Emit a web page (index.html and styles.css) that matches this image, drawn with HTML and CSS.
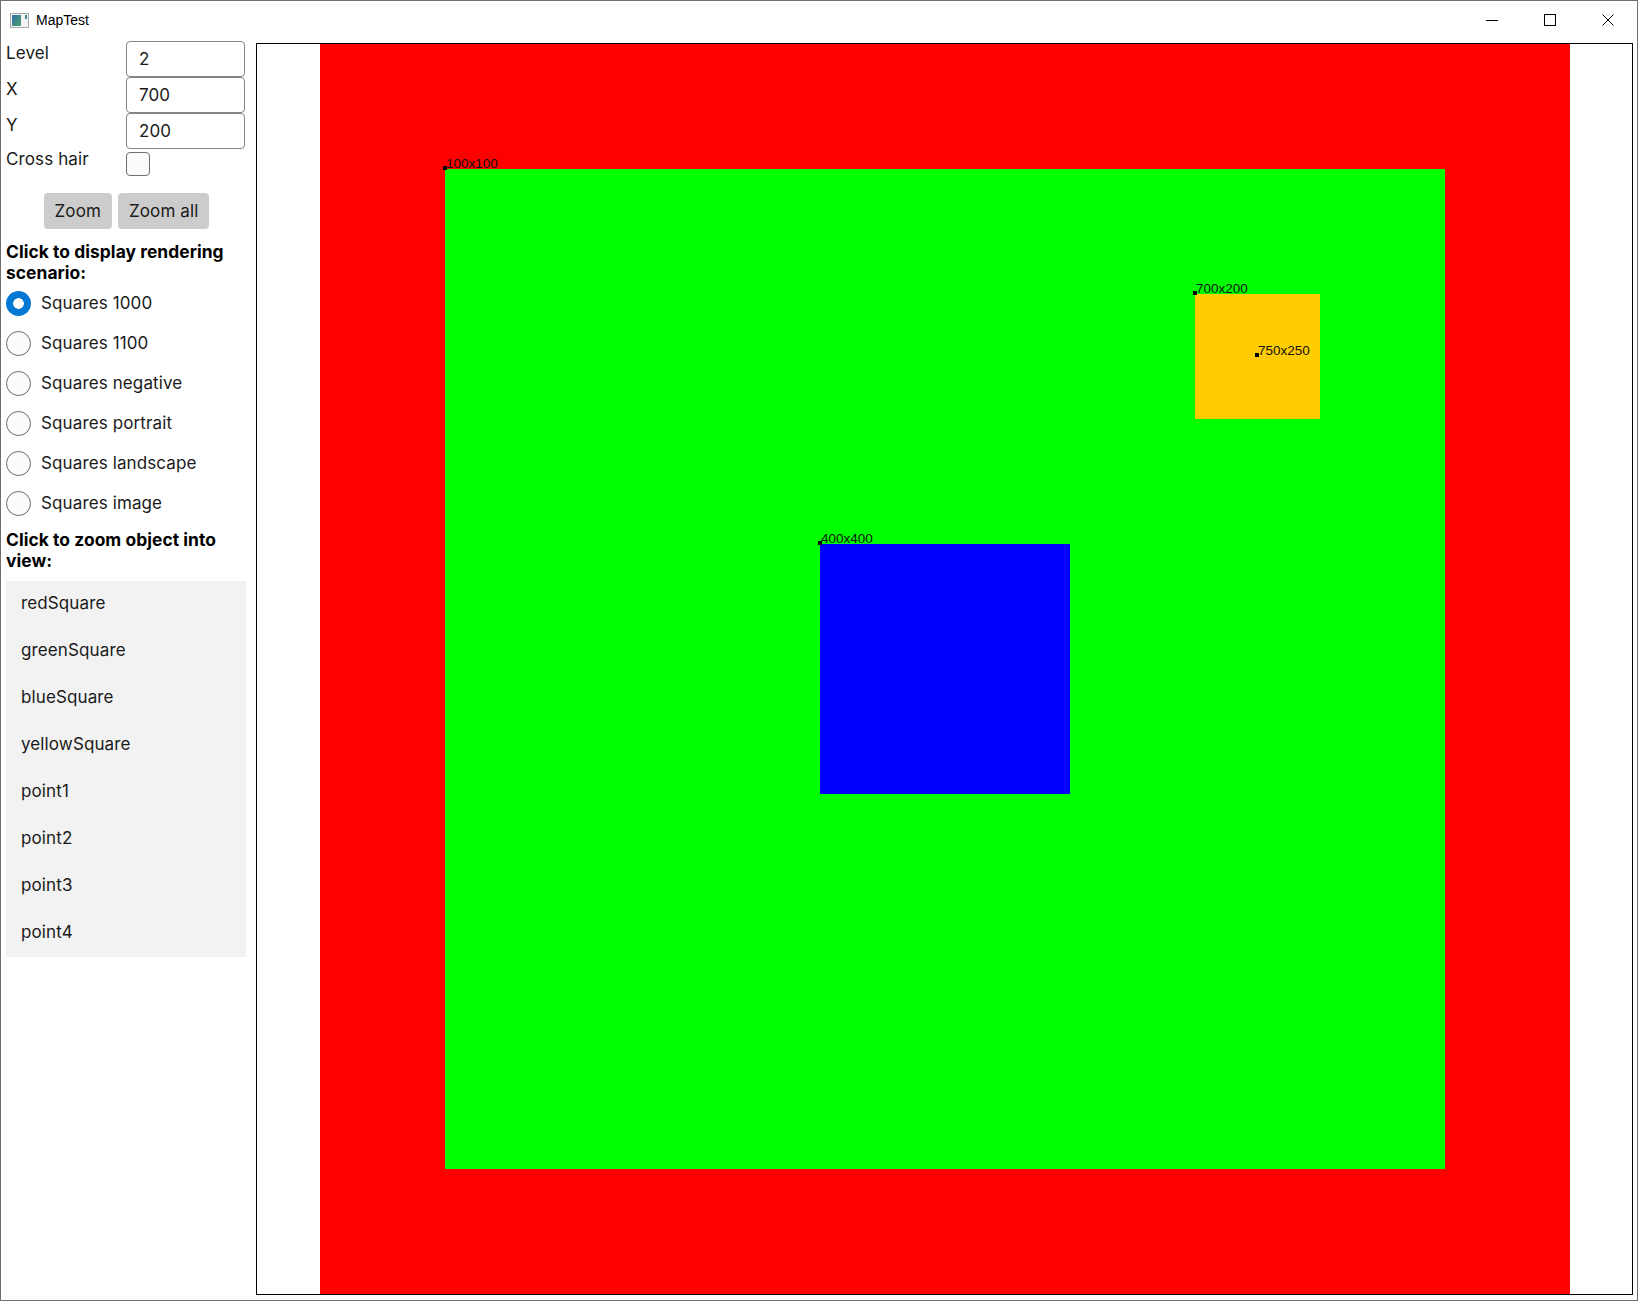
FILE: index.html
```html
<!DOCTYPE html>
<html lang="en">
<head>
<meta charset="utf-8">
<title>MapTest</title>
<link rel="stylesheet" href="styles.css">
</head>
<body>
<div class="window">
  <header class="titlebar">
    <div class="app-title">
      <svg class="app-icon" width="19" height="15" viewBox="0 0 19 15">
        <defs>
          <linearGradient id="ig" x1="0" y1="0" x2="1" y2="1">
            <stop offset="0" stop-color="#2f6fa8"/>
            <stop offset="1" stop-color="#4fa36a"/>
          </linearGradient>
        </defs>
        <rect x="0.5" y="0.5" width="18" height="14" fill="#f4f4f4" stroke="#a8a8a8"/>
        <rect x="2" y="2" width="9" height="11" fill="url(#ig)"/>
        <rect x="15" y="2" width="2" height="4" fill="#3d8b8b"/>
      </svg>
      <span class="title-text">MapTest</span>
    </div>
    <div class="caption-buttons">
      <div class="cap-btn">
        <svg width="12" height="12" viewBox="0 0 12 12"><path d="M0 6.5H12" stroke="#000" stroke-width="1"/></svg>
      </div>
      <div class="cap-btn">
        <svg width="12" height="12" viewBox="0 0 12 12"><rect x="0.5" y="0.5" width="11" height="11" fill="none" stroke="#000" stroke-width="1"/></svg>
      </div>
      <div class="cap-btn">
        <svg width="12" height="12" viewBox="0 0 12 12"><path d="M0.5 0.5L11.5 11.5M11.5 0.5L0.5 11.5" stroke="#000" stroke-width="1"/></svg>
      </div>
    </div>
  </header>

  <main class="content">
    <aside class="sidebar">
      <div class="form">
        <div class="form-label">Level</div>
        <div class="textbox">2</div>
        <div class="form-label">X</div>
        <div class="textbox">700</div>
        <div class="form-label">Y</div>
        <div class="textbox">200</div>
        <div class="form-label form-label-check">Cross hair</div>
        <div class="check-cell"><span class="checkbox"></span></div>
      </div>

      <div class="buttons">
        <button class="btn">Zoom</button>
        <button class="btn">Zoom all</button>
      </div>

      <div class="heading">Click to display rendering scenario:</div>
      <div class="radios">
        <div class="radio-row"><span class="radio checked"></span><span>Squares 1000</span></div>
        <div class="radio-row"><span class="radio"></span><span>Squares 1100</span></div>
        <div class="radio-row"><span class="radio"></span><span>Squares negative</span></div>
        <div class="radio-row"><span class="radio"></span><span>Squares portrait</span></div>
        <div class="radio-row"><span class="radio"></span><span>Squares landscape</span></div>
        <div class="radio-row"><span class="radio"></span><span>Squares image</span></div>
      </div>

      <div class="heading heading-2">Click to zoom object into view:</div>
      <ul class="object-list">
        <li>redSquare</li>
        <li>greenSquare</li>
        <li>blueSquare</li>
        <li>yellowSquare</li>
        <li>point1</li>
        <li>point2</li>
        <li>point3</li>
        <li>point4</li>
      </ul>
    </aside>

    <section class="map">
      <div class="canvas">
        <div class="shape green-square"></div>
        <div class="shape yellow-square"></div>
        <div class="shape blue-square"></div>

        <div class="point p1"><span class="dot"></span><span class="plabel">100x100</span></div>
        <div class="point p2"><span class="dot"></span><span class="plabel">700x200</span></div>
        <div class="point p3"><span class="dot"></span><span class="plabel">750x250</span></div>
        <div class="point p4"><span class="dot"></span><span class="plabel">400x400</span></div>
      </div>
    </section>
  </main>
</div>
</body>
</html>
```

FILE: styles.css
```css
* {
  box-sizing: border-box;
}

html, body {
  margin: 0;
  padding: 0;
  background: #ffffff;
}

.window {
  width: 1638px;
  height: 1301px;
  border: 1px solid #707070;
  display: flex;
  flex-direction: column;
  background: #ffffff;
  font-family: Inter, "Noto Sans", sans-serif;
  color: #1a1a1a;
  overflow: hidden;
}

/* ---------- title bar ---------- */
.titlebar {
  height: 40px;
  flex: 0 0 40px;
  display: flex;
  align-items: stretch;
  justify-content: space-between;
  padding-bottom: 3px;
}

.app-title {
  display: flex;
  align-items: center;
  padding-left: 9px;
  gap: 7px;
}

.app-icon {
  display: block;
  margin-top: 1px;
}

.title-text {
  font-family: "Liberation Sans", Arial, sans-serif;
  font-size: 14px;
  color: #000;
}

.caption-buttons {
  display: flex;
}

.cap-btn {
  width: 58px;
  display: flex;
  align-items: center;
  justify-content: center;
}

.cap-btn svg {
  display: block;
}

/* ---------- content ---------- */
.content {
  flex: 1;
  display: flex;
  min-height: 0;
}

.sidebar {
  width: 255px;
  flex: 0 0 255px;
  padding-left: 5px;
  padding-right: 9px;
  font-size: 17px;
  letter-spacing: 0.12px;
}

.form {
  display: grid;
  grid-template-columns: 120px 119px;
  grid-template-rows: 36px 36px 36px 28px;
}

.form-label {
  line-height: 24px;
  color: #1a1a1a;
}

.form-label-check {
  margin-top: -2px;
}

.textbox {
  height: 36px;
  border: 1px solid #858585;
  border-radius: 4px;
  padding-left: 12px;
  line-height: 34px;
  color: #1a1a1a;
}

.check-cell {
  padding-top: 3px;
}

.checkbox {
  display: block;
  width: 24px;
  height: 24px;
  border: 1px solid #6e6e6e;
  border-radius: 4px;
  background: #fbfbfb;
}

.buttons {
  display: flex;
  justify-content: center;
  gap: 6px;
  margin-top: 16px;
}

.btn {
  height: 36px;
  border: none;
  border-radius: 4px;
  background: #cccccc;
  font-family: inherit;
  font-size: 17px;
  letter-spacing: 0.12px;
  color: #1a1a1a;
  padding: 0 11px;
}

.heading {
  margin-top: 12px;
  font-weight: 700;
  font-size: 17.4px;
  letter-spacing: 0.06px;
  line-height: 21px;
  color: #000;
}

.heading-2 {
  margin-top: 6px;
}

.radios {
  display: flex;
  flex-direction: column;
}

.radio-row {
  height: 40px;
  display: flex;
  align-items: center;
  gap: 10px;
}

.radio {
  width: 25px;
  height: 25px;
  border-radius: 50%;
  border: 1px solid #6a6a6a;
  background: #fbfbfb;
  flex: 0 0 25px;
}

.radio.checked {
  border: none;
  background: radial-gradient(circle, #ffffff 0 5px, #0078d4 5.6px);
}

.object-list {
  list-style: none;
  margin: 10px 0 0 0;
  padding: 0;
  background: #f2f2f2;
  width: 240px;
}

.object-list li {
  height: 47px;
  line-height: 44px;
  padding-left: 15px;
  color: #1a1a1a;
}

/* ---------- map ---------- */
.map {
  flex: 1;
  margin: 2px 4px 5px 0;
  border: 1px solid #000;
  display: flex;
  padding-left: 63px;
  overflow: hidden;
}

.canvas {
  position: relative;
  width: 1250px;
  height: 1250px;
  flex: 0 0 1250px;
  background: #ff0000;
}

.shape {
  position: absolute;
}

.green-square {
  left: 125px;
  top: 125px;
  width: 1000px;
  height: 1000px;
  background: #00ff00;
}

.yellow-square {
  left: 875px;
  top: 250px;
  width: 125px;
  height: 125px;
  background: #ffcc00;
}

.blue-square {
  left: 500px;
  top: 500px;
  width: 250px;
  height: 250px;
  background: #0000ff;
}

.point {
  position: absolute;
  width: 0;
  height: 0;
}

.p1 { left: 125px; top: 125px; }
.p2 { left: 875px; top: 250px; }
.p3 { left: 937px; top: 312px; }
.p4 { left: 500px; top: 500px; }

.dot {
  position: absolute;
  left: -2px;
  top: -3px;
  width: 4px;
  height: 4px;
  background: #000;
}

.plabel {
  position: absolute;
  left: 1px;
  top: -12px;
  font-family: "Liberation Sans", Arial, sans-serif;
  font-size: 13.5px;
  line-height: 13px;
  color: #111;
  white-space: nowrap;
}
```
